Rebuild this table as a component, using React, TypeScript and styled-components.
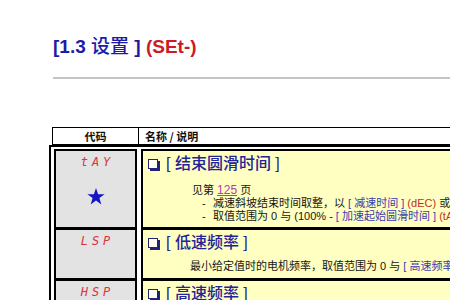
import React from "react";
import styled, { createGlobalStyle } from "styled-components";

const GlobalStyle = createGlobalStyle`
  html, body {
    margin: 0;
    padding: 0;
    background: #fff;
    overflow: hidden;
  }
  body {
    font-family: "Liberation Sans", "Noto Sans CJK SC", sans-serif;
  }
`;

const Page = styled.div`
  width: 450px;
  height: 300px;
  overflow: hidden;
  padding-top: 34px;
  box-sizing: border-box;
`;

const Heading = styled.h1`
  margin: 0 0 0 53px;
  font-size: 19px;
  line-height: 22px;
  font-weight: bold;
  color: #1c1ca6;
  white-space: nowrap;
`;

const Cjk = styled.span`
  font-family: "Noto Sans CJK SC", sans-serif;
  font-weight: 500;
`;

const Mnemonic = styled.span`
  color: #cc1b24;
`;

const Rule = styled.hr`
  margin: 19px 0 0 53px;
  border: 0;
  height: 2px;
  background: #c4c4c4;
`;

const Table = styled.div`
  margin: 48px 0 0 49px;
  width: 520px;
`;

const HeaderRow = styled.div`
  margin-left: 3px;
  height: 18px;
  box-sizing: border-box;
  display: grid;
  grid-template-columns: 86px 1fr;
  border: 1px solid #000;
  border-right: 0;
  font-size: 11px;
  font-weight: bold;
  color: #111;
`;

const HeaderCell = styled.div<{ $first?: boolean }>`
  display: flex;
  align-items: center;
  justify-content: ${(p) => (p.$first ? "center" : "flex-start")};
  padding-left: ${(p) => (p.$first ? "0" : "6px")};
  border-right: ${(p) => (p.$first ? "1px solid #000" : "0")};
  font-family: "Noto Sans CJK SC", sans-serif;
`;

const Body = styled.div`
  border-top: 2px solid #000;
  border-left: 2px solid #000;
  padding: 2px 0 0 3px;
  display: grid;
  grid-template-columns: 83px 1fr;
  grid-template-rows: 79px 51px 60px;
  column-gap: 4px;
`;

const Cell = styled.div`
  box-sizing: border-box;
  border: 2px solid #000;
  border-bottom-width: 1px;
  overflow: hidden;
`;

const CodeCell = styled(Cell)`
  background: #e3e3e3;
  display: flex;
  flex-direction: column;
  align-items: center;
  padding-top: 5px;
`;

const CodeLabel = styled.div`
  font-family: "DejaVu Sans Mono", monospace;
  font-style: italic;
  font-size: 12px;
  line-height: 12px;
  letter-spacing: 4px;
  padding-left: 4px;
  color: #d8343a;
`;

const StarMark = styled.svg`
  margin-top: 20px;
  display: block;
`;

const DescCell = styled(Cell)`
  background: #ffffc2;
  padding: 3px 0 0 5px;
  white-space: nowrap;
`;

const Title = styled.div`
  display: flex;
  align-items: center;
  font-size: 16px;
  line-height: 20px;
  font-weight: 500;
  color: #24249a;
`;

const Box = styled.span`
  display: inline-block;
  width: 8px;
  height: 8px;
  border: 1.5px solid #22227a;
  background: #fffff4;
  box-shadow: 2px 2px 0 #22227a;
  margin-right: 8px;
`;

const Line = styled.div<{ $indent: number; $top?: number }>`
  font-size: 11px;
  line-height: 13px;
  color: #151515;
  padding-left: ${(p) => p.$indent}px;
  margin-top: ${(p) => p.$top ?? 0}px;
`;

const Dash = styled.span`
  display: inline-block;
  width: 11px;
`;

const PageLink = styled.span`
  color: #b03cb0;
  text-decoration: underline;
  font-size: 12px;
`;

const Ref = styled.span`
  color: #3a3aae;
`;

const Code = styled.span`
  color: #c0301c;
`;

const Star = () => (
  <StarMark width="18" height="17" viewBox="0 0 18 17">
    <polygon
      points="9,0 11.1,6.2 17.6,6.2 12.4,10.1 14.3,16.5 9,12.6 3.7,16.5 5.6,10.1 0.4,6.2 6.9,6.2"
      fill="#1515c6"
    />
  </StarMark>
);

export default function App() {
  return (
    <>
      <GlobalStyle />
      <Page>
        <Heading>
          [1.3 <Cjk>设置</Cjk> ] <Mnemonic>(SEt-)</Mnemonic>
        </Heading>
        <Rule />
        <Table>
          <HeaderRow>
            <HeaderCell $first>代码</HeaderCell>
            <HeaderCell>名称 / 说明</HeaderCell>
          </HeaderRow>
          <Body>
            <CodeCell>
              <CodeLabel>tAY</CodeLabel>
              <Star />
            </CodeCell>
            <DescCell>
              <Title>
                <Box />[ 结束圆滑时间 ]
              </Title>
              <Line $indent={44} $top={10}>
                见第 <PageLink>125</PageLink> 页
              </Line>
              <Line $indent={54}>
                <Dash>-</Dash>减速斜坡结束时间取整，以 <Ref>[ 减速时间 ]</Ref> <Code>(dEC)</Code> 或
              </Line>
              <Line $indent={54}>
                <Dash>-</Dash>取值范围为 0 与 (100% - <Ref>[ 加速起始圆滑时间 ]</Ref> <Code>(tA3)</Code>)
              </Line>
            </DescCell>

            <CodeCell>
              <CodeLabel>LSP</CodeLabel>
            </CodeCell>
            <DescCell>
              <Title>
                <Box />[ 低速频率 ]
              </Title>
              <Line $indent={42} $top={7}>
                最小给定值时的电机频率，取值范围为 0 与 <Ref>[ 高速频率 ]</Ref> <Code>(HSP)</Code> 之间。
              </Line>
            </DescCell>

            <CodeCell>
              <CodeLabel>HSP</CodeLabel>
            </CodeCell>
            <DescCell>
              <Title>
                <Box />[ 高速频率 ]
              </Title>
            </DescCell>
          </Body>
        </Table>
      </Page>
    </>
  );
}
